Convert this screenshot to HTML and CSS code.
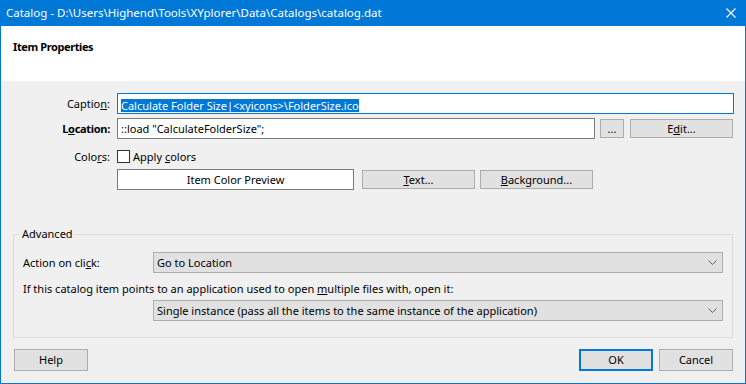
FILE: index.html
```html
<!DOCTYPE html>
<html lang="en">
<head>
    <meta charset="UTF-8">
    <title>Catalog</title>
    <link rel="stylesheet" href="styles.css">
</head>
<body>
    <div class="window">
        <div class="titlebar">
            <span class="title">Catalog - D:\Users\Highend\Tools\XYplorer\Data\Catalogs\catalog.dat</span>
            <svg class="close" width="10" height="10" viewBox="0 0 10 10">
                <path d="M0.5 0.5L9.5 9.5M9.5 0.5L0.5 9.5" stroke="#fff" stroke-width="1.1"/>
            </svg>
        </div>
        <div class="frame">
            <div class="header">Item Properties</div>

            <div class="form">
                <div class="row">
                    <span class="lbl">Captio<u>n</u>:</span>
                    <div class="input focused"><span class="sel">Calculate Folder Size|&lt;xyicons&gt;\FolderSize.ico</span></div>
                </div>
                <div class="row">
                    <span class="lbl bold">L<u>o</u>cation:</span>
                    <div class="input location">::load "CalculateFolderSize";</div>
                    <div class="btn dots">...</div>
                    <div class="btn edit">E<u>d</u>it...</div>
                </div>
                <div class="row row-colors">
                    <span class="lbl">Colo<u>r</u>s:</span>
                    <span class="check"></span>
                    <span class="check-text">Apply <u>c</u>olors</span>
                </div>
                <div class="row row-preview">
                    <span class="lbl"></span>
                    <div class="preview">Item Color Preview</div>
                    <div class="btn color-btn text-btn"><u>T</u>ext...</div>
                    <div class="btn color-btn"><u>B</u>ackground...</div>
                </div>
            </div>

            <fieldset class="advanced">
                <legend>Advanced</legend>
                <div class="adv-row">
                    <span class="adv-lbl">Action on cli<u>c</u>k:</span>
                    <div class="combo">
                        <span>Go to Location</span>
                        <svg width="9" height="5" viewBox="0 0 9 5"><path d="M0.5 0.5L4.5 4.5L8.5 0.5" fill="none" stroke="#606060" stroke-width="1"/></svg>
                    </div>
                </div>
                <div class="adv-text">If this catalog item points to an application used to open <u>m</u>ultiple files with, open it:</div>
                <div class="adv-row second">
                    <span class="adv-lbl"></span>
                    <div class="combo">
                        <span>Single instance (pass all the items to the same instance of the application)</span>
                        <svg width="9" height="5" viewBox="0 0 9 5"><path d="M0.5 0.5L4.5 4.5L8.5 0.5" fill="none" stroke="#606060" stroke-width="1"/></svg>
                    </div>
                </div>
            </fieldset>

            <div class="footer">
                <div class="btn foot-btn">Help</div>
                <div class="spacer"></div>
                <div class="btn foot-btn default">OK</div>
                <div class="btn foot-btn">Cancel</div>
            </div>
        </div>
    </div>
</body>
</html>
```

FILE: styles.css
```css
body {
    margin: 0;
    font-family: "Noto Sans", "Open Sans", sans-serif;
    font-size: 11px;
    color: #000;
}
.window {
    width: 746px;
    height: 384px;
    display: flex;
    flex-direction: column;
    background-color: #f0f0f0;
}
.titlebar {
    height: 26px;
    background-color: #0078d7;
    color: white;
    display: flex;
    align-items: center;
    padding: 0 10px 0 6px;
    font-size: 11.5px;
}
.title {
    flex: 1;
    line-height: 16px;
}
.close {
    display: block;
}
.frame {
    flex: 1;
    border: 1px solid #0078d7;
    border-top: none;
    display: flex;
    flex-direction: column;
}
.header {
    height: 55px;
    background-color: white;
    font-weight: bold;
    letter-spacing: -0.4px;
    padding: 13px 0 0 12px;
    box-sizing: border-box;
    line-height: 16px;
}
.form {
    padding: 12px 11px 0 0;
}
.row {
    display: flex;
    align-items: center;
    height: 21px;
}
.row + .row {
    margin-top: 4px;
}
.row.row-colors {
    margin-top: 11px;
    height: 13px;
}
.row.row-preview {
    margin-top: 6px;
}
.lbl {
    width: 109px;
    margin-right: 7px;
    text-align: right;
    flex-shrink: 0;
}
.bold {
    font-weight: bold;
    letter-spacing: -0.3px;
}
.input {
    flex: 1;
    height: 21px;
    box-sizing: border-box;
    border: 1px solid #7a7a7a;
    background-color: white;
    padding-left: 3px;
    line-height: 19px;
    white-space: nowrap;
    overflow: hidden;
}
.input.focused {
    border-color: #0078d7;
}
.sel {
    display: inline-block;
    background-color: #0078d7;
    color: white;
    line-height: 13px;
    height: 13px;
    vertical-align: middle;
}
.input.location {
    flex: none;
    width: 478px;
}
.btn {
    height: 19px;
    box-sizing: border-box;
    border: 1px solid #adadad;
    background-color: #e1e1e1;
    text-align: center;
    line-height: 17px;
    flex-shrink: 0;
}
.dots {
    width: 24px;
    margin-left: 5px;
}
.edit {
    width: 103px;
    margin-left: 6px;
}
.check {
    width: 13px;
    height: 13px;
    box-sizing: border-box;
    border: 1px solid #333;
    background-color: white;
}
.check-text {
    margin-left: 3px;
}
.preview {
    width: 237px;
    height: 21px;
    box-sizing: border-box;
    border: 1px solid #7a7a7a;
    background-color: white;
    text-align: center;
    line-height: 19px;
}
.color-btn {
    width: 113px;
}
.text-btn {
    margin-left: 8px;
    margin-right: 5px;
}
.advanced {
    margin: 36px 12px 0 12px;
    padding: 0 9px 16px 0;
    border: 1px solid #dcdcdc;
    min-width: 0;
}
.advanced legend {
    margin-left: 5px;
    padding: 0 3px;
    line-height: 16px;
}
.adv-row {
    display: flex;
    align-items: center;
    margin-top: 10px;
}
.adv-row.second {
    margin-top: 3px;
}
.adv-lbl {
    width: 130px;
    padding-left: 9px;
    flex-shrink: 0;
}
.combo {
    flex: 1;
    height: 21px;
    box-sizing: border-box;
    border: 1px solid #adadad;
    background-color: #e1e1e1;
    display: flex;
    align-items: center;
    justify-content: space-between;
    padding: 0 5px 0 3px;
    white-space: nowrap;
}
.combo svg {
    display: block;
}
.adv-text {
    margin-top: 8px;
    padding-left: 9px;
    line-height: 16px;
}
.footer {
    display: flex;
    padding: 11px 12px 0 13px;
}
.foot-btn {
    width: 74px;
    height: 22px;
    line-height: 20px;
}
.foot-btn + .foot-btn {
    margin-left: 6px;
}
.spacer {
    flex: 1;
}
.default {
    border: 2px solid #0078d7;
    line-height: 18px;
}
```
